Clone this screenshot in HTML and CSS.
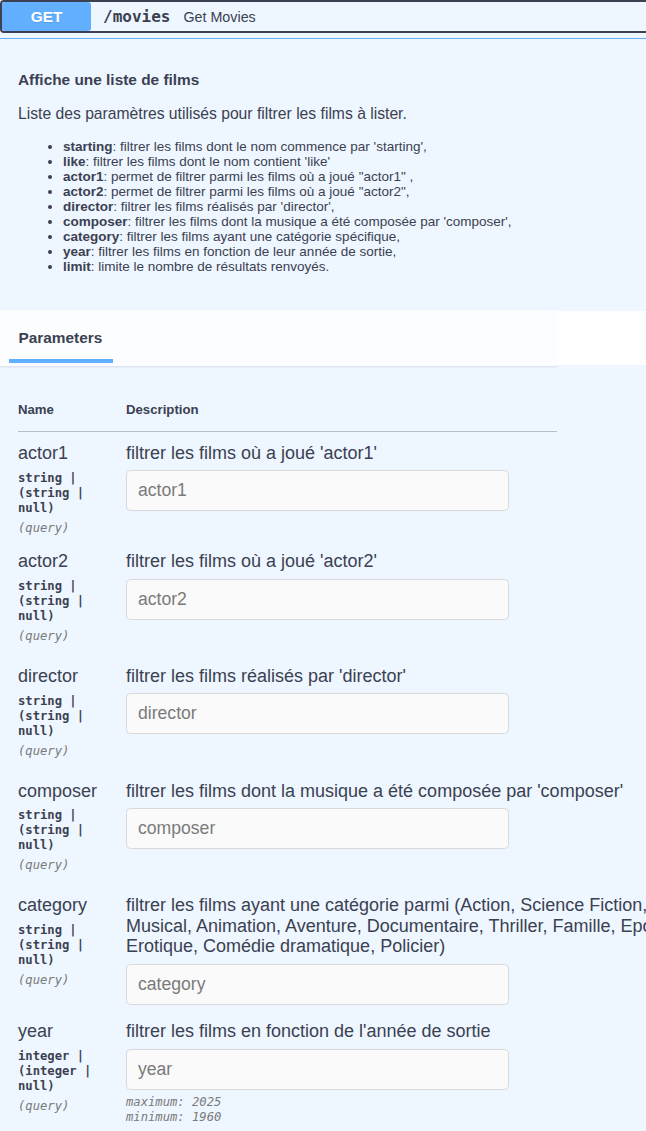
FILE: index.html
```html
<!DOCTYPE html>
<html lang="fr">
<head>
<meta charset="utf-8">
<title>GET /movies</title>
<link rel="stylesheet" href="styles.css">
</head>
<body>
<div class="opblock">
  <div class="summary">
    <span class="method">GET</span>
    <span class="path">/movies</span>
    <span class="summary-desc">Get Movies</span>
  </div>
  <div class="op-body">
    <div class="op-desc">
      <h4 class="op-title">Affiche une liste de films</h4>
      <p class="op-text">Liste des paramètres utilisés pour filtrer les films à lister.</p>
      <ul class="op-list">
        <li><strong>starting</strong>: filtrer les films dont le nom commence par 'starting',</li>
        <li><strong>like</strong>: filtrer les films dont le nom contient 'like'</li>
        <li><strong>actor1</strong>: permet de filtrer parmi les films où a joué "actor1" ,</li>
        <li><strong>actor2</strong>: permet de filtrer parmi les films où a joué "actor2",</li>
        <li><strong>director</strong>: filtrer les films réalisés par 'director',</li>
        <li><strong>composer</strong>: filtrer les films dont la musique a été composée par 'composer',</li>
        <li><strong>category</strong>: filtrer les films ayant une catégorie spécifique,</li>
        <li><strong>year</strong>: filtrer les films en fonction de leur année de sortie,</li>
        <li><strong>limit</strong>: limite le nombre de résultats renvoyés.</li>
      </ul>
    </div>

    <div class="section-header">
      <div class="tab-header">
        <div class="tab-item"><h4 class="tab-title">Parameters</h4></div>
      </div>
      <div class="header-fill"></div>
    </div>

    <div class="params">
      <div class="params-head">
        <div class="head-cell">Name</div>
        <div class="head-cell">Description</div>
      </div>

      <div class="param param--first">
        <div class="param-name-col">
          <div class="param-name">actor1</div>
          <div class="param-type">string | (string | null)</div>
          <div class="param-in">(query)</div>
        </div>
        <div class="param-desc-col">
          <div class="param-desc">filtrer les films où a joué 'actor1'</div>
          <input class="param-input" type="text" placeholder="actor1">
        </div>
      </div>

      <div class="param">
        <div class="param-name-col">
          <div class="param-name">actor2</div>
          <div class="param-type">string | (string | null)</div>
          <div class="param-in">(query)</div>
        </div>
        <div class="param-desc-col">
          <div class="param-desc">filtrer les films où a joué 'actor2'</div>
          <input class="param-input" type="text" placeholder="actor2">
        </div>
      </div>

      <div class="param">
        <div class="param-name-col">
          <div class="param-name">director</div>
          <div class="param-type">string | (string | null)</div>
          <div class="param-in">(query)</div>
        </div>
        <div class="param-desc-col">
          <div class="param-desc">filtrer les films réalisés par 'director'</div>
          <input class="param-input" type="text" placeholder="director">
        </div>
      </div>

      <div class="param">
        <div class="param-name-col">
          <div class="param-name">composer</div>
          <div class="param-type">string | (string | null)</div>
          <div class="param-in">(query)</div>
        </div>
        <div class="param-desc-col">
          <div class="param-desc">filtrer les films dont la musique a été composée par 'composer'</div>
          <input class="param-input" type="text" placeholder="composer">
        </div>
      </div>

      <div class="param">
        <div class="param-name-col">
          <div class="param-name">category</div>
          <div class="param-type">string | (string | null)</div>
          <div class="param-in">(query)</div>
        </div>
        <div class="param-desc-col">
          <div class="param-desc">filtrer les films ayant une catégorie parmi (Action, Science Fiction,<br>Musical, Animation, Aventure, Documentaire, Thriller, Famille, Epouvante,<br>Erotique, Comédie dramatique, Policier)</div>
          <input class="param-input" type="text" placeholder="category">
        </div>
      </div>

      <div class="param">
        <div class="param-name-col">
          <div class="param-name">year</div>
          <div class="param-type">integer | (integer | null)</div>
          <div class="param-in">(query)</div>
        </div>
        <div class="param-desc-col">
          <div class="param-desc">filtrer les films en fonction de l'année de sortie</div>
          <input class="param-input" type="text" placeholder="year">
          <div class="param-constraints">
            <div>maximum: 2025</div>
            <div>minimum: 1960</div>
          </div>
        </div>
      </div>
    </div>
  </div>
</div>
</body>
</html>
```

FILE: styles.css
```css
html {
  overflow: hidden;
  background: #eef6ff;
}

body {
  margin: 0;
  background: #eef6ff;
  color: #3b4151;
  font-family: "Liberation Sans", Arial, sans-serif;
}

.opblock {
  width: 1100px;
  background: #eef6ff;
}

/* ---- summary bar ---- */
.summary {
  display: flex;
  align-items: center;
  height: 33px;
  box-sizing: border-box;
  border: 2px solid #3b4151;
  border-radius: 4px;
}

.method {
  display: flex;
  align-items: center;
  justify-content: center;
  flex: none;
  width: 89px;
  height: 29px;
  background: #61affe;
  border-radius: 3px;
  color: #fff;
  font-size: 15.4px;
  font-weight: bold;
  text-shadow: 0 1px 0 rgba(0, 0, 0, 0.1);
}

.path {
  margin-left: 12px;
  font-family: "DejaVu Sans Mono", "Liberation Mono", monospace;
  font-size: 16px;
  font-weight: bold;
  color: #3b4151;
}

.summary-desc {
  margin-left: 13px;
  font-size: 14.3px;
  color: #3b4151;
}

/* ---- body ---- */
.op-body {
  margin-top: 5px;
  border-top: 1px solid #61affe;
}

.op-desc {
  padding: 32px 0 36px 18px;
}

.op-title {
  margin: 0;
  font-size: 15.4px;
  font-weight: bold;
}

.op-text {
  margin: 16px 0 0;
  font-size: 15.7px;
}

.op-list {
  margin: 15.5px 0 0;
  padding-left: 45px;
  font-size: 13.5px;
  line-height: 15px;
}

/* ---- section header ---- */
.section-header {
  display: flex;
  align-items: flex-start;
}

.tab-header {
  flex: none;
  width: 557px;
  height: 56px;
  padding-left: 9px;
  box-sizing: border-box;
  background: rgba(255, 255, 255, 0.8);
  box-shadow: 0 1px 2px rgba(0, 0, 0, 0.1);
}

.tab-item {
  width: 104px;
  box-sizing: border-box;
  padding: 19px 0 12.5px 9.5px;
  border-bottom: 4.4px solid #61affe;
}

.tab-title {
  margin: 0;
  font-size: 15.4px;
  font-weight: bold;
}

.header-fill {
  flex: none;
  width: 200px;
  height: 54px;
  margin-top: 1.5px;
  background: #fff;
}

/* ---- parameter table ---- */
.params {
  width: 539px;
  margin-left: 18px;
  padding-top: 36px;
}

.params-head {
  display: grid;
  grid-template-columns: 108px 1fr;
  padding-bottom: 14.4px;
  border-bottom: 1px solid #b8bec7;
  font-size: 13.2px;
  font-weight: bold;
}

.param {
  display: grid;
  grid-template-columns: 108px 1fr;
  padding: 10px 0 6.5px;
}

.param--first {
  padding-top: 11px;
  padding-bottom: 0;
}

.param-name-col {
  max-width: 95px;
}

.param-name {
  font-size: 18px;
  line-height: 20.5px;
}

.param-type {
  margin-top: 7.25px;
  font-family: "DejaVu Sans Mono", "Liberation Mono", monospace;
  font-size: 12.2px;
  font-weight: bold;
  line-height: 15px;
}

.param-in {
  margin: 5px 0 5.5px;
  font-family: "DejaVu Sans Mono", "Liberation Mono", monospace;
  font-size: 12.2px;
  font-style: italic;
  line-height: 15px;
  color: #7a7a7a;
}

.param-desc {
  font-size: 18px;
  line-height: 20.5px;
  white-space: nowrap;
}

.param-input {
  display: block;
  width: 383px;
  height: 41px;
  margin: 7px 0 0;
  padding: 0 11px;
  box-sizing: border-box;
  border: 1px solid #d9d9d9;
  border-radius: 4.4px;
  background: #fafafa;
  font-family: "Liberation Sans", Arial, sans-serif;
  font-size: 17.6px;
  color: #3b4151;
}

.param-input::placeholder {
  color: #7a7a7a;
}

.param-constraints {
  margin-top: 5.25px;
  font-family: "DejaVu Sans Mono", "Liberation Mono", monospace;
  font-size: 12.2px;
  font-style: italic;
  line-height: 15px;
  color: #7a7a7a;
}
```
